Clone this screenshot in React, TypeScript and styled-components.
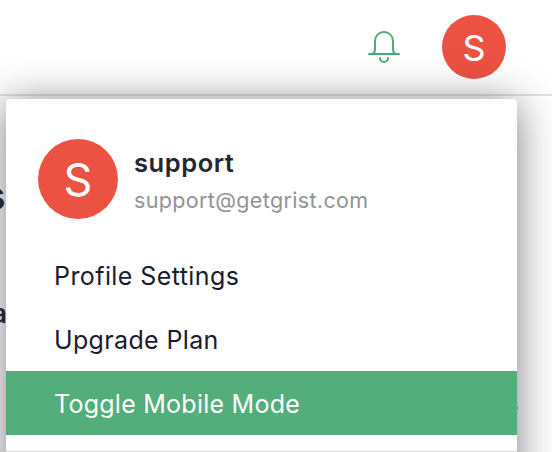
import React from "react";
import styled, { createGlobalStyle } from "styled-components";

const GlobalStyle = createGlobalStyle`
  html, body { margin: 0; overflow: hidden; background: #fff; }
  * { box-sizing: border-box; }
`;

const Page = styled.div`
  position: relative;
  width: 552px;
  height: 452px;
  overflow: hidden;
  background: #fff;
  color: #262633;
  font-family: Inter, "Liberation Sans", sans-serif;
`;

const Header = styled.header`
  display: flex;
  justify-content: flex-end;
  align-items: center;
  gap: 42px;
  height: 96px;
  padding: 0 46px 0 0;
  border-bottom: 2px solid #e2e2e2;
`;

const BellIcon = styled.svg`
  width: 32px;
  height: 34px;
  fill: none;
  stroke: #4eab78;
  stroke-width: 2;
  stroke-linecap: round;
  stroke-linejoin: round;
`;

const Avatar = styled.div<{ $size: number; $font: number }>`
  display: flex;
  flex: none;
  align-items: center;
  justify-content: center;
  width: ${(p) => p.$size}px;
  height: ${(p) => p.$size}px;
  padding-top: 1px;
  border-radius: 50%;
  background: #eb5242;
  color: #fff;
  font-size: ${(p) => p.$font}px;
  line-height: 1;
`;

const Content = styled.main`
  display: flex;
  flex-direction: column;
  align-items: flex-start;
`;

const Heading = styled.h1`
  margin: 75px 0 0 -17px;
  font-size: 40px;
  line-height: 50px;
  font-weight: 700;
`;

const Fragment = styled.p`
  margin: 68px 0 0 -8px;
  font-size: 26px;
  line-height: 50px;
  font-weight: 600;
`;

const Menu = styled.div`
  position: absolute;
  left: 6px;
  top: 99px;
  width: 511px;
  height: 420px;
  padding-top: 40px;
  border-radius: 4px;
  background: #fff;
  box-shadow: 0 4px 40px rgba(38, 38, 51, 0.6);
`;

const Account = styled.div`
  display: flex;
  gap: 16px;
  height: 104px;
  padding-left: 32px;
`;

const Identity = styled.div`
  display: flex;
  flex-direction: column;
  padding-top: 5px;
`;

const Name = styled.div`
  font-size: 25.5px;
  line-height: 37px;
  font-weight: 600;
  letter-spacing: 0.55px;
`;

const Email = styled.div`
  color: #929299;
  font-size: 21.5px;
  line-height: 39px;
  letter-spacing: 0.35px;
`;

const Item = styled.div<{ $active?: boolean; $tracking: number }>`
  height: 64px;
  padding-left: 48px;
  background: ${(p) => (p.$active ? "#53ae7c" : "transparent")};
  color: ${(p) => (p.$active ? "#fff" : "#1d1a2d")};
  font-size: 25px;
  line-height: 67px;
  letter-spacing: ${(p) => p.$tracking}px;
`;

const Divider = styled.div`
  height: 2px;
  margin-top: 16px;
  background: #d9d9d9;
`;

const EdgeMark = styled.span`
  position: absolute;
  left: 511px;
  top: 307px;
  width: 1px;
  height: 4px;
  background: #929299;
`;

export default function App() {
  return (
    <>
      <GlobalStyle />
      <Page>
        <Header>
          <BellIcon viewBox="0 0 32 34">
            <path d="M1 24H31M3 24C6 24 7 22 7 19V11A9 9 0 0 1 16 2A9 9 0 0 1 25 11V19C25 22 26 24 29 24M12 28A4 4 0 0 0 20 28" />
          </BellIcon>
          <Avatar $size={64} $font={36}>S</Avatar>
        </Header>
        <Content>
          <Heading>s</Heading>
          <Fragment>a</Fragment>
        </Content>
        <Menu>
          <Account>
            <Avatar $size={80} $font={45}>S</Avatar>
            <Identity>
              <Name>support</Name>
              <Email>support@getgrist.com</Email>
            </Identity>
          </Account>
          <Item $tracking={0.42}>Profile Settings</Item>
          <Item $tracking={0.35}>Upgrade Plan</Item>
          <Item $active $tracking={0.25}>Toggle Mobile Mode</Item>
          <Divider />
          <EdgeMark />
        </Menu>
      </Page>
    </>
  );
}
